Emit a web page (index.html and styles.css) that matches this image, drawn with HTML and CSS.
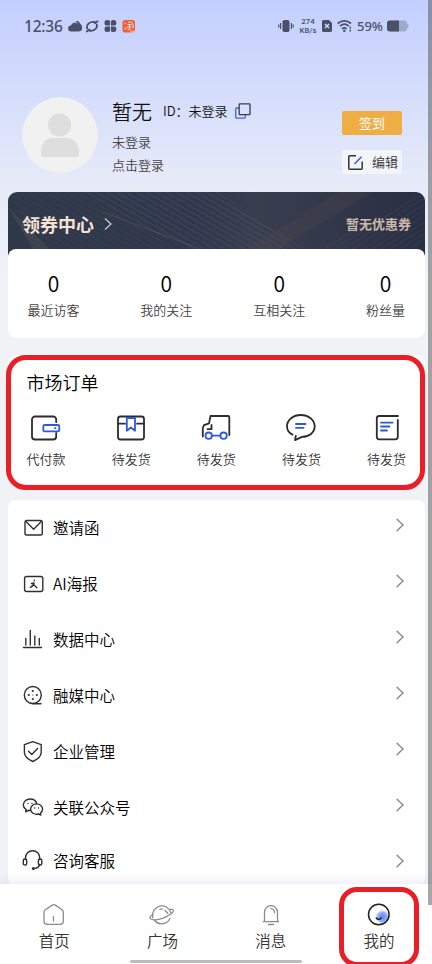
FILE: index.html
```html
<!DOCTYPE html>
<html lang="zh-CN">
<head>
<meta charset="utf-8">
<title>我的</title>
<link rel="stylesheet" href="styles.css">
</head>
<body>
<div class="page">
  <div class="status">
    <div class="status-left">
      <span class="clock">12:36</span>
      <svg width="68" height="14" viewBox="0 0 68 14">
        <path d="M3.200 12.500a3 3 0 0 1-.2-6A4.200 4.200 0 0 1 9.500 4.500a4 4 0 0 1 1.200 8z" fill="#4a5068"/>
        <path d="M7.500 2.300c2.500-1 5 1 4.800 4.200l-1.800-1.300z" fill="#4a5068"/>
        <path d="M19.200 9.500C18 5.500 21.500 2.500 26.500 3M28.800 5.500c1 3.500-2.500 6.700-7 6.300M18.700 12.500l2.800-2M26.800 4.200l2.800-2" fill="none" stroke="#4a5068" stroke-width="1.800" stroke-linecap="round"/>
        <g fill="#4a5068"><rect x="36.500" y="1" width="5.800" height="5.800" rx="2.500"/><rect x="42.500" y="1" width="5.800" height="5.800" rx="2.500"/><rect x="36.500" y="7.200" width="5.800" height="5.800" rx="2.500"/><rect x="42.500" y="7.200" width="5.800" height="5.800" rx="2.500"/><rect x="39.500" y="4" width="6" height="6"/></g>
        <path d="M42.500 2.500v4.500h4M42.500 11.500v-4.500h-4" stroke="#c9d4fc" stroke-width=".9" fill="none"/>
        <rect x="54.500" y="1" width="12.500" height="12.500" rx="2.500" fill="#e9623c"/>
        <path d="M56.500 4l1.500 1M56.500 10.500l1.800-2.500M60 3.500c2-1 5-.5 5 2v4M59.500 5.500h4M59 8h4.500M61.500 5.500v4M59.500 10.500h3" stroke="#fff" stroke-width=".8" fill="none"/>
        <path d="M62.500 12.500h4.500" stroke="#fbe3dc" stroke-width="2" stroke-dasharray="1 1"/>
      </svg>
    </div>
    <div class="status-right">
      <svg width="16" height="14" viewBox="0 0 16 14"><rect x="4.500" y="1" width="7" height="12" rx="1.800" fill="#4a5068"/><path d="M2.600 4v6M13.400 4v6M.8 5.500v3M15.200 5.500v3" stroke="#4a5068" stroke-width="1.200"/></svg>
      <span class="speed"><span>274</span><span>KB/s</span></span>
      <svg width="10" height="14" viewBox="0 0 10 14"><path d="M1.500 1H7l3 3v7.500a1.500 1.500 0 0 1-1.500 1.500h-7A1.500 1.500 0 0 1 0 11.500v-9A1.500 1.500 0 0 1 1.500 1z" fill="#4a5068"/><path d="M3 5l4 4M7 5L3 9" stroke="#dce3fd" stroke-width="1.300"/></svg>
      <svg class="wifi" width="15" height="14" viewBox="0 0 15 14"><path d="M.7 4.500c4-3.600 9.300-3.600 13.300 0M3 7.200c2.700-2.400 6.200-2.400 8.700 0M5 9.800c1.500-1.300 3.200-1.300 4.600 0" fill="none" stroke="#4a5068" stroke-width="1.700"/><circle cx="7.300" cy="11.800" r="1.300" fill="#4a5068"/><path d="M13.300 7.500v5" stroke="#4a5068" stroke-width="1.500" stroke-dasharray="2 1"/></svg>
      <span class="percent">59%</span>
      <svg width="22" height="12" viewBox="0 0 22 12"><rect x="0" y=".5" width="20" height="11" rx="3" fill="#9fa9cf"/><path d="M3 .5h9v11H3a3 3 0 0 1-3-3v-5a3 3 0 0 1 3-3z" fill="#4a5068"/><path d="M20.700 4v4" stroke="#9fa9cf" stroke-width="1.300"/></svg>
    </div>
  </div>

  <header class="profile">
    <svg class="avatar" width="76" height="76" viewBox="0 0 76 76"><circle cx="38" cy="38" r="38" fill="#f1f1f1"/><circle cx="37.500" cy="28" r="11.600" fill="#dedede"/><path d="M19 56c0-9 4-15 12-15h13c8 0 13 6 13 15 0 3-1 4-4 4H23c-3 0-4-1-4-4z" fill="#dedede"/></svg>
    <div class="who">
      <div class="name-line">
        <span class="name">暂无</span>
        <span class="uid">ID：未登录</span>
        <svg width="16" height="16" viewBox="0 0 16 16" fill="none" stroke-width="1.300"><path d="M4 5H1.700a1 1 0 0 0-1 1v8.200a1 1 0 0 0 1 1h7.600a1 1 0 0 0 1-1V12" stroke="#3b66dd"/><rect x="4.200" y=".8" width="10.800" height="10.800" rx=".6" stroke="#3b3c4a"/></svg>
      </div>
      <div class="sub">未登录</div>
      <div class="sub">点击登录</div>
    </div>
    <div class="actions">
      <div class="btn sign">签到</div>
      <div class="btn edit">
        <svg width="15" height="15" viewBox="0 0 15 15" fill="none" stroke-width="1.500"><path d="M8 .8H1.800a1 1 0 0 0-1 1v11.400a1 1 0 0 0 1 1h11.400a1 1 0 0 0 1-1V6.500" stroke="#333"/><path d="M6.500 9L13.500 1.800" stroke="#3460dc"/></svg>
        <span>编辑</span>
      </div>
    </div>
  </header>

  <section class="coupon">
    <svg class="rays" width="417" height="66" viewBox="0 0 417 66" preserveAspectRatio="none">
      <defs>
        <linearGradient id="base" x1="0" x2="1" y1="0" y2="0"><stop offset="0" stop-color="#2f3849"/><stop offset=".45" stop-color="#30374d"/><stop offset=".6" stop-color="#393e4f"/><stop offset="1" stop-color="#292e43"/></linearGradient>
        <pattern id="lines" width="5" height="5" patternUnits="userSpaceOnUse" patternTransform="rotate(30)"><path d="M0 1h5" stroke="#8b95b5" stroke-width=".7" opacity=".22"/></pattern>
        <pattern id="lines2" width="5" height="5" patternUnits="userSpaceOnUse" patternTransform="rotate(-32)"><path d="M0 1h5" stroke="#8b95b5" stroke-width=".7" opacity=".16"/></pattern>
      </defs>
      <rect width="417" height="66" fill="url(#base)"/>
      <path d="M70 0H210L310 66H195z" fill="url(#lines)"/>
      <path d="M0 0H70L190 66H35z" fill="url(#lines)" opacity=".5"/>
      <path d="M290 66L417 0v50L390 66z" fill="url(#lines2)"/>
      <path d="M225 66L330 0h35L255 66z" fill="#5b4e4d" opacity=".2"/>
      <path d="M95 20L195 58" stroke="#8a7a70" opacity=".3"/>
      <path d="M0 15L50 66H30z" fill="#6a625e" opacity=".25"/>
    </svg>
    <div class="coupon-head">
      <span class="coupon-title">领券中心</span>
      <svg width="8" height="14" viewBox="0 0 8 14"><path d="M1 1.500L7 7 1 12.500" fill="none" stroke="#cdbfb5" stroke-width="1.400"/></svg>
      <span class="coupon-note">暂无优惠券</span>
    </div>
    <div class="stats">
      <div class="stat"><b>0</b><span>最近访客</span></div>
      <div class="stat"><b>0</b><span>我的关注</span></div>
      <div class="stat"><b>0</b><span>互相关注</span></div>
      <div class="stat"><b>0</b><span>粉丝量</span></div>
    </div>
  </section>

  <section class="orders">
    <h2>市场订单</h2>
    <div class="order-row">
      <div class="order"><svg width="39" height="30" viewBox="0 0 39 30"><path d="M29.200 10V7.500a3 3 0 0 0-3-3H8a3 3 0 0 0-3 3v17a3 3 0 0 0 3 3h18.200a3 3 0 0 0 3-3V21"/><rect class="blue" x="16.300" y="13" width="16" height="6.400" rx="1.500"/><path class="blue" d="M28 16.200h.5"/></svg><span>代付款</span></div>
      <div class="order"><svg width="39" height="30" viewBox="0 0 39 30"><rect x="6" y="4.500" width="26" height="23" rx="2.500"/><path d="M6 11.700h7M25 11.700h7"/><path class="blue" d="M14.800 6v12.700l4.100-3.200 4.100 3.200V6z"/></svg><span>待发货</span></div>
      <div class="order"><svg width="39" height="30" viewBox="0 0 39 30"><path d="M5.800 24.500v-8.500l1.200-2.800 5-1.800 1.500-7.400H31a1.300 1.300 0 0 1 1.300 1.300V23M14.500 13v4.200h-4"/><circle class="blue" cx="11.700" cy="23.700" r="3.200"/><circle class="blue" cx="26.600" cy="23.700" r="3.200"/><path class="blue" d="M15 23.700h8.300"/></svg><span>待发货</span></div>
      <div class="order"><svg width="39" height="30" viewBox="0 0 39 30"><path d="M10.500 22.600C7 20.700 5 17.800 5 14.400 5 7.700 11.300 3 18.800 3s13.900 4.700 13.900 11.300c0 6.300-5.600 10.600-12.700 10.600l-7 3.200.8-4.200"/><path class="blue" d="M14 12h9.500M14 15.800h7.500"/></svg><span>待发货</span></div>
      <div class="order"><svg width="39" height="30" viewBox="0 0 39 30"><path d="M31 4H12.300a2.500 2.500 0 0 0-2.500 2.500v18.300a2.500 2.500 0 0 0 2.500 2.500h16a2.500 2.500 0 0 0 2.500-2.500V8"/><path class="blue" d="M14 10.700h11.500M14 14.500h8.500M14 18.500h6"/></svg><span>待发货</span></div>
    </div>
    <div class="mark mark-orders"></div>
  </section>

  <section class="menu">
    <div class="item"><svg width="22" height="24" viewBox="0 0 22 24"><rect x="3" y="4.500" width="17.300" height="14.500" rx="1.800"/><path d="M4 5.500l7.600 7.800L19.300 5.500"/></svg><span>邀请函</span><svg class="go" width="8" height="14" viewBox="0 0 8 14"><path d="M1 1.200L7 7 1 12.800"/></svg></div>
    <div class="item"><svg width="22" height="24" viewBox="0 0 22 24"><rect x="2.600" y="4.500" width="18.200" height="15" rx="2"/><path d="M8.300 15.300c2-.8 3.300-2.300 3.700-4.300M11.500 12.500l3.400 3.200M9.500 11.500l2.500-.5M12.300 8.300v.4"/></svg><span>AI海报</span><svg class="go" width="8" height="14" viewBox="0 0 8 14"><path d="M1 1.200L7 7 1 12.800"/></svg></div>
    <div class="item"><svg width="22" height="24" viewBox="0 0 22 24"><path d="M1.500 19.500h18M3.800 10.500v6.500M8.300 2.500v14.500M12.800 8v9M17.300 10.500v6.500"/></svg><span>数据中心</span><svg class="go" width="8" height="14" viewBox="0 0 8 14"><path d="M1 1.200L7 7 1 12.800"/></svg></div>
    <div class="item"><svg width="22" height="24" viewBox="0 0 22 24"><circle cx="10.800" cy="11" r="8.500"/><path d="M11 19.800h8"/><g class="dot"><circle cx="10.800" cy="7" r="1.100"/><circle cx="6.800" cy="11" r="1.100"/><circle cx="14.800" cy="11" r="1.100"/><circle cx="10.800" cy="15" r="1.100"/><circle cx="10.800" cy="11" r=".6"/></g></svg><span>融媒中心</span><svg class="go" width="8" height="14" viewBox="0 0 8 14"><path d="M1 1.200L7 7 1 12.800"/></svg></div>
    <div class="item"><svg width="22" height="24" viewBox="0 0 22 24"><path d="M10.800 1.700l8.400 3v7.800c0 4-3.400 6.700-8.400 9-5-2.300-8.400-5-8.400-9V4.700z"/><path d="M6.500 11.300l3.300 3.200 5.800-6"/></svg><span>企业管理</span><svg class="go" width="8" height="14" viewBox="0 0 8 14"><path d="M1 1.200L7 7 1 12.800"/></svg></div>
    <div class="item"><svg width="22" height="24" viewBox="0 0 22 24"><path d="M8.300 14.500l-2-.2-2.600 1.500.3-2.500C2.300 12.200 1.300 10.700 1.300 8.900c0-3.300 3-5.900 6.700-5.900 3.500 0 6.200 2 6.600 4.900"/><path d="M14.600 7.900c3.400 0 6 2.300 6 5.200 0 1.600-.8 3-2.100 3.900l.3 2.100-2.200-1.100c-4.300 1-8-1.400-8-4.900 0-2.900 2.600-5.200 6-5.200z"/><g class="dot"><circle cx="6" cy="7.500" r=".7"/><circle cx="10" cy="7.500" r=".7"/><circle cx="12.700" cy="12" r=".7"/><circle cx="16.500" cy="12" r=".7"/></g></svg><span>关联公众号</span><svg class="go" width="8" height="14" viewBox="0 0 8 14"><path d="M1 1.200L7 7 1 12.800"/></svg></div>
    <div class="item last"><svg width="22" height="24" viewBox="0 0 22 24"><path d="M3.500 10.500V9c0-4.200 3-7.200 7.100-7.200s7.100 3 7.100 7.200v1.500M17.700 15.500c-.7 2.300-2.500 3.700-5.500 4"/><rect x="1.300" y="10" width="3.400" height="6" rx="1.600"/><rect x="16.400" y="10" width="3.400" height="6" rx="1.600"/><circle class="dot" cx="11.300" cy="19.500" r="1.500"/></svg><span>咨询客服</span><svg class="go" width="8" height="14" viewBox="0 0 8 14"><path d="M1 1.200L7 7 1 12.800"/></svg></div>
  </section>

  <nav class="tabs">
    <div class="tab"><svg width="28" height="24" viewBox="0 0 28 24"><path d="M12.300 2.100a3 3 0 0 1 3.200 0l6.500 4.600a3 3 0 0 1 1.300 2.400v9.200a3 3 0 0 1-3 3H7a3 3 0 0 1-3-3V9.100a3 3 0 0 1 1.300-2.400zM13.500 13.500v4.500"/></svg><span>首页</span></div>
    <div class="tab"><svg width="28" height="24" viewBox="0 0 28 24"><path d="M4.800 14.500A9.300 9.300 0 1 1 23 10M6.500 17.500a9.300 9.300 0 0 0 15.500-2"/><path d="M4.700 11.500C1.500 13.500 1.300 15 3 16c3 1.600 9.500.6 14.500-1.800 6.500-3.100 9.500-6.700 7-7.700-.5-.2-1.200-.3-2.200-.2"/><path d="M12 6.200h2.500M17 7.500l2.800 2.800"/></svg><span>广场</span></div>
    <div class="tab"><svg width="28" height="24" viewBox="0 0 28 24"><path d="M7.500 18V9.200a6.500 6.500 0 0 1 13 0V18M6.300 18.600h15.400M11.500 21.500h5M14 5.700c2.300.3 3.500 1.700 3.500 4"/></svg><span>消息</span></div>
    <div class="tab active"><svg width="28" height="24" viewBox="0 0 28 24"><defs><radialGradient id="glow"><stop offset="0" stop-color="#5b86f8"/><stop offset=".6" stop-color="#7c9dfa" stop-opacity=".85"/><stop offset="1" stop-color="#9db4fb" stop-opacity="0"/></radialGradient></defs><circle cx="17.500" cy="14" r="7.500" fill="url(#glow)" stroke="none"/><circle cx="13.800" cy="11.500" r="10.300"/><path d="M11.300 15c1.200 1.700 3.600 1.700 4.800 0"/></svg><span>我的</span></div>
    <div class="home-bar"></div>
    <div class="mark mark-mine"></div>
  </nav>

  <div class="scrollbar"></div>
</div>
</body>
</html>
```
FILE: styles.css
```css
* { box-sizing: border-box; }

body {
  margin: 0;
  font-family: "Noto Sans CJK SC", sans-serif;
  font-weight: 350;
  color: #111;
}

svg { display: block; flex: none; }

.page {
  position: relative;
  width: 432px;
  height: 964px;
  overflow: hidden;
  background: linear-gradient(#c3cfff 0, #d3dcfc 85px, #e6eaf8 180px, #f1f2f6 280px);
}

.status {
  display: flex;
  justify-content: space-between;
  height: 52px;
  padding: 0 24px 0 24px;
  align-items: center;
  color: #4a5068;
  font-family: "Noto Sans", sans-serif;
}

.status-left, .status-right { display: flex; align-items: center; }
.status-right { margin-right: -1px; }
.clock { width: 44px; margin-top: -1px; font-size: 15.500px; font-weight: 500; letter-spacing: -.2px; }
.speed {
  display: flex;
  flex-direction: column;
  width: 18px;
  margin: 0 5px 0 5px;
  align-items: center;
  font-family: Roboto, sans-serif;
  font-size: 7.800px;
  font-weight: 500;
  line-height: 9px;
}
.wifi { margin-left: 5px; }
.percent { width: 27px; margin: 0 3px 0 5px; font-size: 13px; font-weight: 500; line-height: 20px; }

.profile {
  display: flex;
  height: 140px;
  padding: 45px 30px 0 22px;
}
.avatar { border-radius: 50%; }
.who { margin-left: 14px; flex: 1; }
.name-line { display: flex; align-items: center; height: 28px; }
.name { width: 51px; font-size: 20px; }
.uid { width: 72px; font-size: 13px; line-height: 20px; white-space: nowrap; }
.sub { height: 23px; line-height: 23px; font-size: 13px; color: #444; }
.name-line + .sub { margin-top: 5px; }

.actions { width: 60px; padding-top: 14px; }
.btn {
  display: flex;
  align-items: center;
  justify-content: center;
  height: 24px;
  border-radius: 2px;
  font-size: 13px;
  line-height: 22px;
}
.sign { background: #efae43; color: #fff; font-weight: 400; }
.edit { margin-top: 15px; background: #f3f5fc; justify-content: space-between; padding: 0 4px 0 6px; color: #333; }

.coupon {
  position: relative;
  width: 417px;
  margin: 0 0 0 8px;
  border-radius: 9px;
  overflow: hidden;
}
.rays { position: absolute; top: 0; left: 0; }
.coupon-head {
  position: relative;
  display: flex;
  align-items: center;
  height: 57px;
  padding: 7px 14px 0 14px;
}
.coupon-title { width: 82px; font-size: 18px; font-weight: 700; color: #f5e2d4; }
.coupon-note { margin: -1px 0 0 auto; font-size: 13px; font-weight: 700; color: #ccb8ac; }

.stats {
  position: relative;
  display: flex;
  justify-content: space-between;
  height: 89px;
  padding: 20px 20px 0 19.500px;
  background: #fff;
  border-radius: 8px;
}
.stat { display: flex; flex-direction: column; align-items: center; }
.stat b { height: 30px; line-height: 28px; font-size: 21px; font-weight: 350; color: #000; }
.stat span { height: 24px; line-height: 22px; font-size: 13px; color: #444; }

.orders {
  position: relative;
  width: 417px;
  height: 129px;
  margin: 17px 0 0 8px;
  padding: 14px 19px 0 18.500px;
  background: #fff;
  border-radius: 8px;
}
.orders h2 { margin: 0; height: 28px; line-height: 27px; font-size: 18px; font-weight: 350; color: #000; }
.order-row { display: flex; justify-content: space-between; margin-top: 15px; }
.order { width: 39px; }
.order svg { fill: none; stroke: #2c2c2e; stroke-width: 1.800; stroke-linecap: round; stroke-linejoin: round; }
.order .blue { stroke: #2d5bd8; }
.order span { display: block; margin-top: 6px; line-height: 22px; font-size: 13px; color: #333; white-space: nowrap; }

.mark { position: absolute; border: 5px solid #e81f27; pointer-events: none; }
.mark-orders { left: -2px; top: 0; width: 419px; height: 135px; border-radius: 20px; }

.menu {
  width: 417px;
  margin: 16px 0 0 8px;
  background: #fff;
  border-radius: 8px;
}
.item { display: flex; align-items: center; height: 56px; padding: 0 21px 0 14px; font-size: 15.500px; color: #000; }
.item.last { height: 50px; }
.item span { flex: 1; margin: -2px 0 0 9px; line-height: 24px; }
.item svg { fill: none; stroke: #303030; stroke-width: 1.400; stroke-linecap: round; stroke-linejoin: round; }
.item .dot { fill: #303030; stroke: none; }
.item .go { margin-bottom: 7px; stroke: #8a8a8a; }
.item.last .go { margin-bottom: 0; }

.scrollbar { position: absolute; top: 0; right: 0; width: 4px; height: 905px; background: rgba(80, 80, 80, .5); }

.tabs {
  position: absolute;
  left: 0;
  bottom: 0;
  display: flex;
  width: 432px;
  height: 80px;
  background: #fff;
  box-shadow: 0 -3px 10px rgba(130, 130, 210, .15);
}
.tab { display: flex; flex-direction: column; align-items: center; width: 108.300px; flex: none; padding-top: 19px; font-size: 15.500px; color: #333; }
.tab svg { fill: none; stroke: #8c8c8c; stroke-width: 1.300; stroke-linecap: round; }
.tab.active svg { stroke: #222; stroke-width: 1.500; }
.tab span { margin-top: 1px; line-height: 24px; }
.home-bar { position: absolute; left: 130px; top: 76px; width: 172px; height: 3px; border-radius: 2px; background: #bcbcbc; }
.mark-mine { left: 339px; top: 3px; width: 80px; height: 80px; border-radius: 18px; }
```
